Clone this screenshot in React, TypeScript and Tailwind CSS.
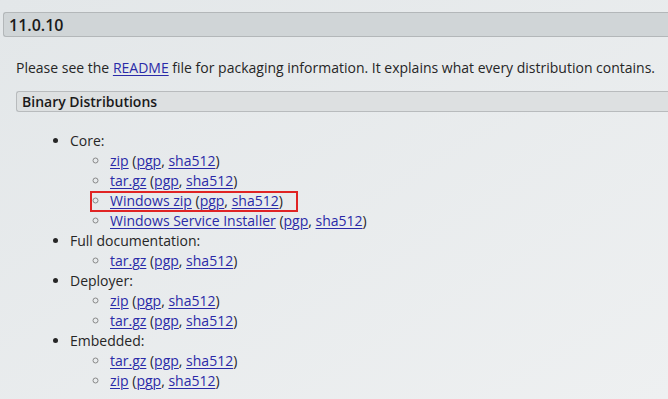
type Link = { label: string; boxed?: boolean };

interface Section {
  name: string;
  items: Link[];
}

const sections: Section[] = [
  {
    name: "Core:",
    items: [
      { label: "zip" },
      { label: "tar.gz" },
      { label: "Windows zip", boxed: true },
      { label: "Windows Service Installer" },
    ],
  },
  { name: "Full documentation:", items: [{ label: "tar.gz" }] },
  { name: "Deployer:", items: [{ label: "zip" }, { label: "tar.gz" }] },
  { name: "Embedded:", items: [{ label: "tar.gz" }, { label: "zip" }] },
];

function A({ children }: { children: React.ReactNode }) {
  return <a className="text-[#2a2aa8] underline underline-offset-2 decoration-1">{children}</a>;
}

export default function App() {
  return (
    <div
      className="w-[668px] h-[399px] overflow-hidden bg-gradient-to-br from-[#e3e7e9] to-[#eef0f1] text-[#262626] text-[14px] leading-[20px]"
      style={{ fontFamily: '"Open Sans", "Noto Sans", sans-serif' }}
    >
      <div className="pt-3 pl-[3px]">
        {/* Version header */}
        <div className="h-[25px] flex items-center pl-[5px] bg-[#d0d5d7] border border-r-0 border-[#b3b7b9] rounded-l-[3px] text-[16px] font-semibold text-[#1a1a1a]">
          11.0.10
        </div>

        <p className="mt-[21px] ml-[13px]">
          Please see the <A>README</A> file for packaging information. It explains what every distribution contains.
        </p>

        {/* Sub header */}
        <div className="mt-[13px] ml-[13px] h-[21px] flex items-center pl-[5px] bg-[#dde0e1] border border-r-0 border-[#b8bbbd] rounded-l-[3px] font-semibold text-[#1a1a1a]">
          Binary Distributions
        </div>

        <ul className="mt-[19px] ml-[55px] list-disc pl-[12px]">
          {sections.map((s) => (
            <li key={s.name}>
              {s.name}
              <ul className="list-[circle] pl-[40px] marker:text-[#888]">
                {s.items.map((it, i) => (
                  <li key={i}>
                    <span
                      className={
                        it.boxed
                          ? "relative after:content-[''] after:absolute after:-left-[20px] after:-right-[15px] after:top-0 after:-bottom-[2px] after:border-2 after:border-[#e02424]"
                          : ""
                      }
                    >
                      <A>{it.label}</A> (<A>pgp</A>, <A>sha512</A>)
                    </span>
                  </li>
                ))}
              </ul>
            </li>
          ))}
        </ul>
      </div>
    </div>
  );
}
